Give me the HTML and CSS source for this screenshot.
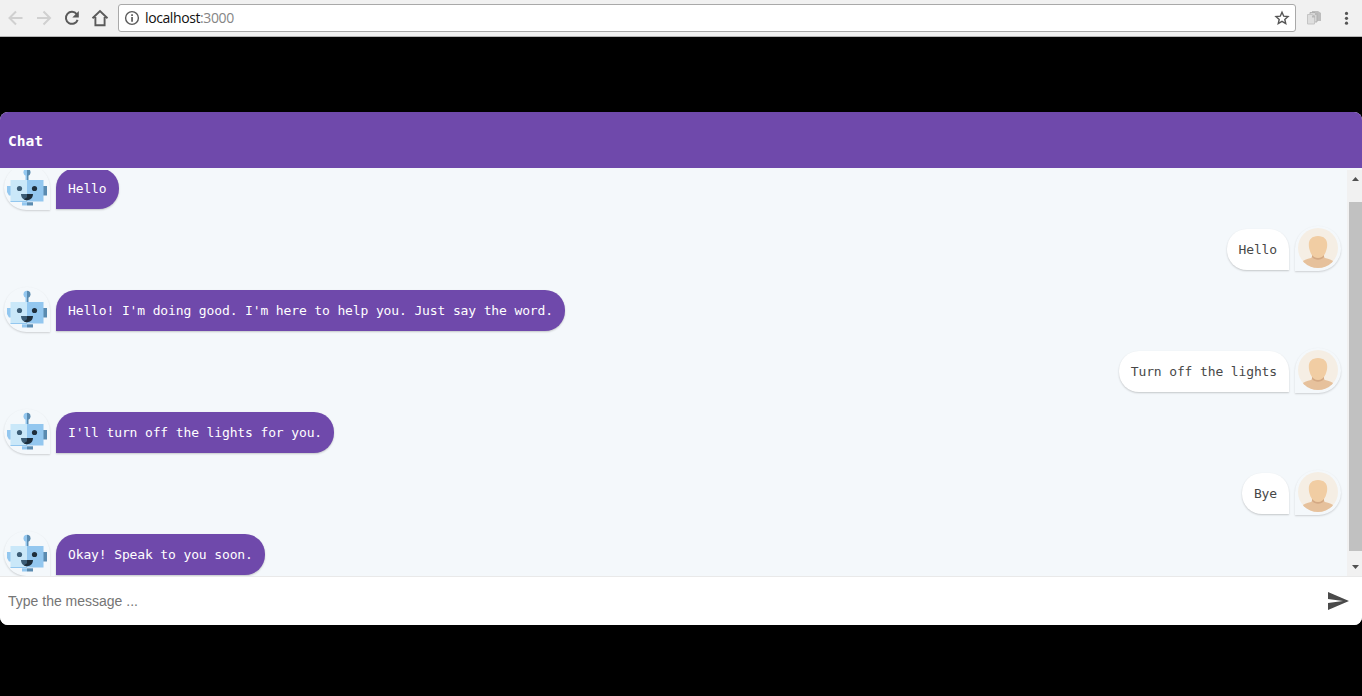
FILE: index.html
```html
<!DOCTYPE html>
<html lang="en">
<head>
<meta charset="utf-8">
<title>Chat</title>
<link rel="stylesheet" href="styles.css">
</head>
<body>
<svg class="defs" width="0" height="0" aria-hidden="true">
  <symbol id="bot" viewBox="0 0 40 40">
    <path fill="#93c7ef" d="M0 18h4v9.500H2L0 24z"/>
    <path fill="#5a8bb0" d="M36 18h4v9.500h-4z"/>
    <path fill="#93c7ef" d="M18.500 6H20v8h-1.500z"/>
    <path fill="#5a8bb0" d="M20 6h1.500v8H20z"/>
    <path fill="#93c7ef" d="M20 .8a3.500 3.500 0 0 0 0 7z"/>
    <path fill="#5a8bb0" d="M20 .8a3.500 3.500 0 0 1 0 7z"/>
    <path fill="#cae8f9" d="M3.500 12H20v21.500H3.500z"/>
    <path fill="#93c7ef" d="M20 12h16.500v21.500H20z"/>
    <path fill="#93c7ef" d="M3.500 33H20v1H3.500z"/>
    <circle cx="12.500" cy="20.500" r="2.600" fill="#3c5d76"/>
    <circle cx="27.500" cy="20.500" r="2.600" fill="#1e2e3b"/>
    <path fill="#3c5d76" d="M14 26h6v6.200c-3.400 0-6-2.400-6-6.200z"/>
    <path fill="#1e2e3b" d="M20 26h6c0 3.800-2.600 6.200-6 6.200-1.300 0-2-.4-3-1l3-2z"/>
    <path fill="#93c7ef" d="M15 34.300h5v3.200h-5z"/>
    <path fill="#5a8bb0" d="M20 34.300h6v3.200h-6z"/>
  </symbol>
  <symbol id="person" viewBox="0 0 40 40">
    <clipPath id="face-clip"><circle cx="20" cy="20" r="20"/></clipPath>
    <g clip-path="url(#face-clip)">
      <path fill="#f5eee4" d="M0 0h40v40H0z"/>
      <path fill="#e6c19c" d="M3 35c2-3 6-4 10-5 1-.5 1-1 1-4h12c0 3 0 3.500 1 4 4 1 8 2 10 5v6H3z"/>
      <path fill="#d4a984" d="M14 26.500h12v2.500c-3 3.500-9 3.500-12 0z"/>
      <path fill="#f1cda3" d="M20 8c6 0 9.200 3.500 9.200 8.500 0 3-.7 5.500-1.700 8-1.300 3.500-4.500 5.500-7.500 5.500s-6.200-2-7.500-5.500c-1-2.500-1.700-5-1.700-8C10.800 11.500 14 8 20 8z"/>
    </g>
  </symbol>
</svg>

<header class="browser">
  <svg class="nav-icons" width="118" height="36" viewBox="0 0 118 36" fill="none" stroke-width="2">
    <path stroke="#d0d0d0" d="M22.500 18H10M16 11.500L9.500 18l6.500 6.500"/>
    <path stroke="#d0d0d0" d="M37 18h12.500M43.500 11.500L50 18l-6.500 6.500"/>
    <path stroke="#5a5a5a" d="M76.700 14.200a6 6 0 1 0 .9 5.600"/>
    <path fill="#5a5a5a" d="M78.800 11v6.500h-6.500z"/>
    <path stroke="#5a5a5a" stroke-width="1.900" d="M92.500 18.200L100 11l7.500 7.200M95.400 17v8.200h9.200V17"/>
  </svg>
  <div class="address">
    <svg width="16" height="16" viewBox="0 0 16 16"><circle cx="8" cy="8" r="6.400" fill="none" stroke="#5a5a5a" stroke-width="1.400"/><path fill="#5a5a5a" d="M7.200 4.200h1.700v1.700H7.200zM7.200 7h1.700v4.800H7.200z"/></svg>
    <span class="url">localhost<span class="port">:3000</span></span>
    <svg class="star" width="16" height="16" viewBox="0 0 16 16"><path fill="none" stroke="#555" stroke-width="1.400" stroke-linejoin="miter" d="M8 2.200l1.750 4 4.250.4-3.200 2.800.95 4.200L8 11.400l-3.750 2.200.95-4.200L2 6.600l4.250-.4z"/></svg>
  </div>
  <svg class="tools" width="66" height="36" viewBox="0 0 66 36">
    <path fill="#bdbdbd" d="M16 11h6l3 2v8h-9z"/>
    <path fill="#d6d6d6" stroke="#aaa" stroke-width=".8" d="M14 12.500h5l2 2V22h-7z"/>
    <path fill="#dedede" stroke="#c5c5c5" d="M11.500 14.500h5l2 2v7.500h-7z"/>
    <path fill="#b8b8b8" d="M19 13h3v2h-3zM16 15.500h3v2h-3z"/>
    <circle cx="50.500" cy="13.400" r="1.600" fill="#555"/><circle cx="50.500" cy="18.300" r="1.600" fill="#555"/><circle cx="50.500" cy="23.200" r="1.600" fill="#555"/>
  </svg>
</header>

<main class="chat">
  <h1 class="title">Chat</h1>
  <section class="messages">
    <div class="list">
      <div class="row"><div class="avatar"><svg><use href="#bot"/></svg></div><p class="bubble">Hello</p></div>
      <div class="row me"><div class="avatar"><svg><use href="#person"/></svg></div><p class="bubble">Hello</p></div>
      <div class="row"><div class="avatar"><svg><use href="#bot"/></svg></div><p class="bubble">Hello! I'm doing good. I'm here to help you. Just say the word.</p></div>
      <div class="row me"><div class="avatar"><svg><use href="#person"/></svg></div><p class="bubble">Turn off the lights</p></div>
      <div class="row"><div class="avatar"><svg><use href="#bot"/></svg></div><p class="bubble">I'll turn off the lights for you.</p></div>
      <div class="row me"><div class="avatar"><svg><use href="#person"/></svg></div><p class="bubble">Bye</p></div>
      <div class="row"><div class="avatar"><svg><use href="#bot"/></svg></div><p class="bubble">Okay! Speak to you soon.</p></div>
    </div>
    <div class="scrollbar">
      <svg width="15" height="17" viewBox="0 0 15 17"><path fill="#505050" d="M5 11l3.500-4 3.500 4z"/></svg>
      <div class="track"><div class="thumb"></div></div>
      <svg width="15" height="17" viewBox="0 0 15 17"><path fill="#505050" d="M5 6h7l-3.500 4z"/></svg>
    </div>
  </section>
  <form class="composer">
    <input class="input" type="text" placeholder="Type the message ...">
    <svg class="send" width="21" height="18" viewBox="0 0 21 18"><path fill="#4a4a4a" d="M0 0l21 9L0 18v-7l15-2L0 7z"/></svg>
  </form>
</main>
</body>
</html>
```

FILE: styles.css
```css
* { box-sizing: border-box; }
body { margin: 0; height: 696px; overflow: hidden; background: #000; }
.defs { position: absolute; }

.browser {
  display: flex;
  height: 37px;
  background: #f1f1f1;
  border-bottom: 1px solid #b5b5b5;
}
.nav-icons, .tools { flex: none; }
.address {
  flex: 1;
  display: flex;
  align-items: center;
  height: 28px;
  margin-top: 4px;
  padding: 0 5px;
  background: #fff;
  border: 1px solid #a9a9a9;
  border-radius: 3px;
}
.url {
  margin-left: 5px;
  font: 14px/20px "Open Sans", "Noto Sans", sans-serif;
  letter-spacing: -0.4px;
  color: #111;
}
.port { color: #858585; }
.star { margin-left: auto; }

.chat {
  margin-top: 75px;
  height: 513px;
  display: flex;
  flex-direction: column;
  overflow: hidden;
  border-radius: 8px;
  background: #f4f8fb;
}
.title {
  flex: none;
  height: 56px;
  margin: 0;
  padding: 1px 8px 0;
  background: #6f49ab;
  color: #fff;
  font: bold 14.6px/56px "DejaVu Sans Mono", monospace;
}
.messages {
  flex: 1;
  min-height: 0;
  margin-top: 2px;
  display: flex;
  overflow: hidden;
}
.list {
  flex: 1;
  display: flex;
  flex-direction: column;
  gap: 15px;
  margin-top: -5px;
  padding: 0 6px 0 4px;
}
.row {
  flex: none;
  display: flex;
  gap: 6px;
  height: 46px;
}
.me { flex-direction: row-reverse; }
.avatar {
  width: 46px;
  height: 45px;
  padding: 3px;
  border-radius: 23px 23px 0 23px;
  box-shadow: 0 1px 2px rgba(0, 0, 0, .16);
}
.me .avatar { padding-top: 2px; border-radius: 23px 23px 23px 0; }
.avatar svg { display: block; width: 40px; height: 40px; }
.bubble {
  height: 41px;
  margin: 3px 0 0;
  padding: 0 12px;
  border-radius: 20px 20px 20px 0;
  background: #6f49ab;
  color: #fff;
  box-shadow: 0 1px 2px rgba(0, 0, 0, .2);
  font: 13px/41px "DejaVu Sans Mono", monospace;
  letter-spacing: -.129px;
  white-space: nowrap;
}
.me .bubble {
  border-radius: 20px 20px 0 20px;
  background: #fff;
  color: #484848;
}
.scrollbar {
  width: 15px;
  display: flex;
  flex-direction: column;
  background: #f1f1f1;
}
.scrollbar svg { flex: none; display: block; }
.track { flex: 1; padding: 15px 0 8px 2px; }
.thumb { height: 100%; background: #c1c1c1; }

.composer {
  flex: none;
  display: flex;
  align-items: center;
  height: 49px;
  padding: 0 13px 0 8px;
  background: #fff;
  border-top: 1px solid #e9e9e9;
}
.input {
  flex: 1;
  padding: 0;
  border: 0;
  outline: 0;
  background: none;
  font: 14px "Liberation Sans", Arial, sans-serif;
}
.input::placeholder { color: #757575; }
```
